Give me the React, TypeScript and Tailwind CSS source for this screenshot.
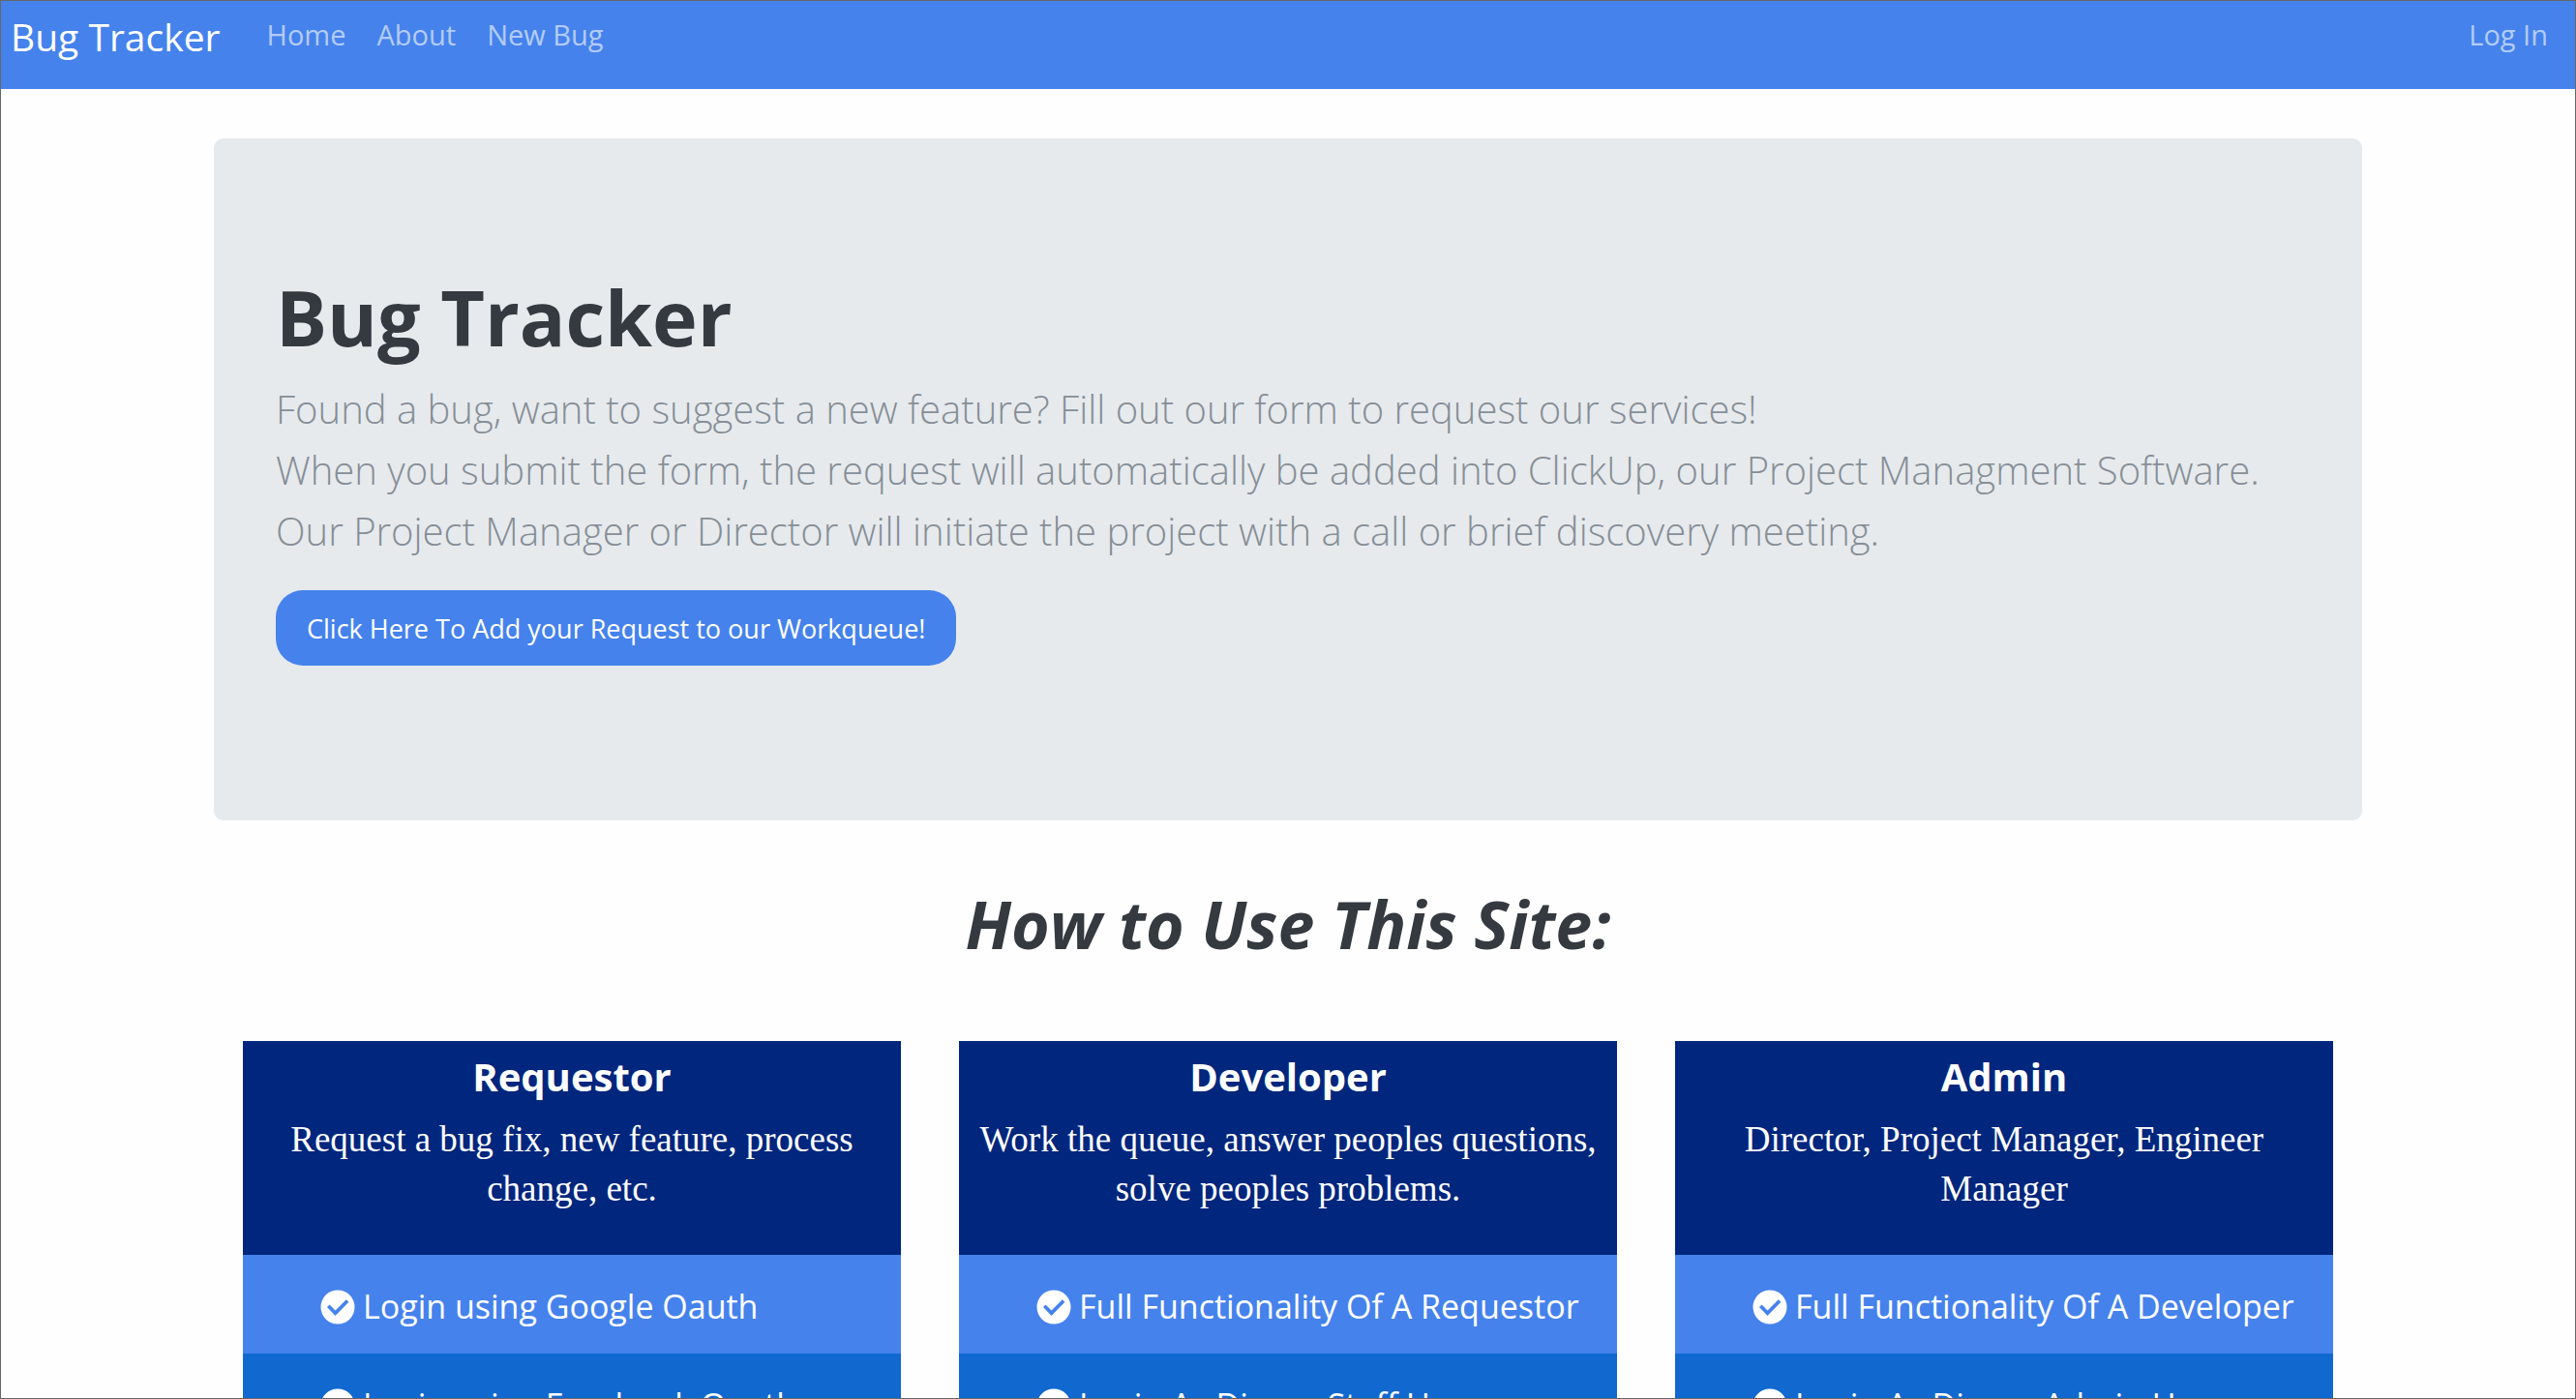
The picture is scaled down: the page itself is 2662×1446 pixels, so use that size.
type Role = { name: string; summary: string; features: string[] };

const roles: Role[] = [
  {
    name: "Requestor",
    summary: "Request a bug fix, new feature, process change, etc.",
    features: ["Login using Google Oauth", "Login using Facebook Oauth"],
  },
  {
    name: "Developer",
    summary: "Work the queue, answer peoples questions, solve peoples problems.",
    features: ["Full Functionality Of A Requestor", "Login As Disney Staff User"],
  },
  {
    name: "Admin",
    summary: "Director, Project Manager, Engineer Manager",
    features: ["Full Functionality Of A Developer", "Login As Disney Admin User"],
  },
];

function CheckCircle() {
  return (
    <svg viewBox="0 0 36 36" className="size-9 shrink-0" fill="currentColor" fillRule="evenodd" aria-hidden="true">
      <path d="M18 .5a17.5 17.5 0 1 1 0 35a17.5 17.5 0 1 1 0-35zM7 18l8.5 9L29.4 12.8L26.8 10.2L15.5 21.4L9.6 15.6z" />
    </svg>
  );
}

function Navbar() {
  return (
    <header className="flex h-[91px] shrink-0 items-start bg-[#4582ec] pt-[7px] pr-7 pl-[10px]">
      <a href="#" className="mr-12 text-[39px] leading-[60px] text-white">
        Bug Tracker
      </a>
      <nav className="flex flex-1 gap-8 text-[29px] leading-[56px] text-white/60">
        <a href="#home">Home</a>
        <a href="#about">About</a>
        <a href="#new">New Bug</a>
        <a href="#login" className="ml-auto">
          Log In
        </a>
      </nav>
    </header>
  );
}

function Hero() {
  return (
    <section className="mt-[51px] rounded-[10px] bg-[#e6eaed] px-16 pt-[138px] pb-40">
      <h1 className="mb-4 text-[79px] leading-[94px] font-bold text-[#343a40]">Bug Tracker</h1>
      <p className="mb-[30px] text-[40px] leading-[63px] font-light text-[#868e96]">
        Found a bug, want to suggest a new feature? Fill out our form to request our services!
        <br />
        When you submit the form, the request will automatically be added into ClickUp, our Project Managment Software.
        <br />
        Our Project Manager or Director will initiate the project with a call or brief discovery meeting.
      </p>
      <button type="button" className="block rounded-[28px] bg-[#4582ec] px-8 pt-5 pb-[18px] text-[27px] leading-10 text-white">
        Click Here To Add your Request to our Workqueue!
      </button>
    </section>
  );
}

function RoleCard({ role }: { role: Role }) {
  return (
    <article className="text-white">
      <div className="bg-[#00267d] px-[15px] pt-[13px] pb-[43px] text-center">
        <h3 className="mb-[15px] text-[40px] leading-[48px] font-bold">{role.name}</h3>
        <p className="font-['Liberation_Serif',serif] text-[37px] leading-[51px]">{role.summary}</p>
      </div>
      <ul>
        {role.features.map((feature) => (
          <li
            key={feature}
            className="flex items-center gap-2 pt-7 pb-[23px] pl-20 text-[34px] leading-[51px] whitespace-nowrap odd:bg-[#4582ec] even:bg-[#1169d0]"
          >
            <CheckCircle />
            {feature}
          </li>
        ))}
      </ul>
    </article>
  );
}

export default function App() {
  return (
    <div className="flex h-screen flex-col overflow-hidden border border-[#666] bg-[#fefefe] font-['Open_Sans',sans-serif]">
      <Navbar />
      <main className="mx-auto w-full max-w-[2220px]">
        <Hero />
        <h2 className="mt-[66px] mb-20 text-center text-[68px] leading-[82px] font-bold text-[#343a40] italic">
          How to Use This Site:
        </h2>
        <div className="grid grid-cols-3 gap-[60px] px-[30px]">
          {roles.map((role) => (
            <RoleCard key={role.name} role={role} />
          ))}
        </div>
      </main>
    </div>
  );
}
